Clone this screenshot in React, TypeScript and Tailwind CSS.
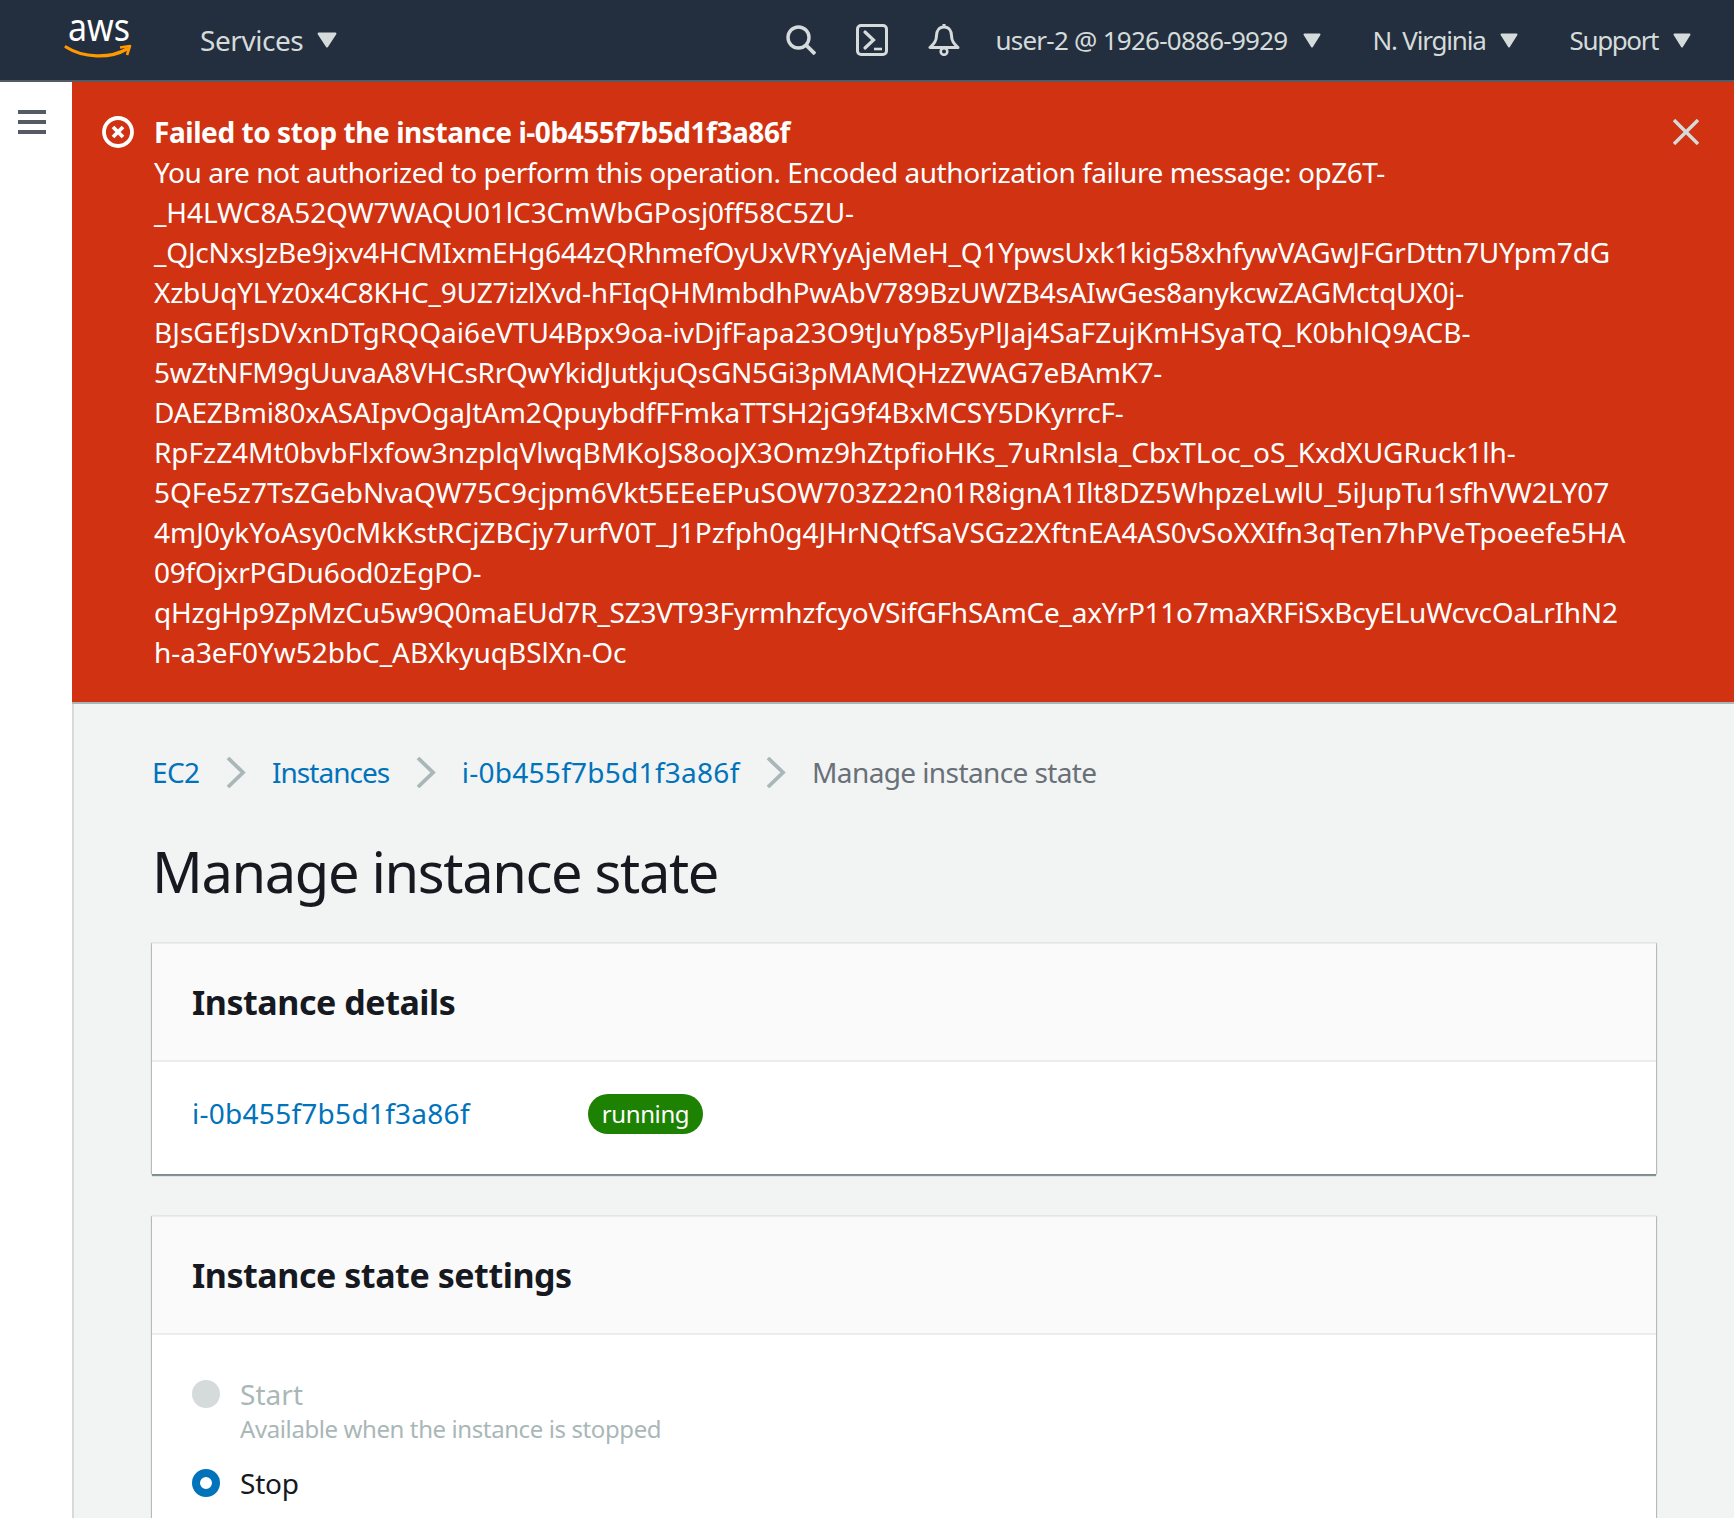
import React from 'react';

// widths of the encoded message lines differ per line, so each one carries its own tracking
const messageLines = [
  { text: 'You are not authorized to perform this operation. Encoded authorization failure message: opZ6T-', cls: 'tracking-[-0.45px]' },
  { text: '_H4LWC8A52QW7WAQU01lC3CmWbGPosj0ff58C5ZU-', cls: 'tracking-[-0.06px]' },
  { text: '_QJcNxsJzBe9jxv4HCMIxmEHg644zQRhmefOyUxVRYyAjeMeH_Q1YpwsUxk1kig58xhfywVAGwJFGrDttn7UYpm7dG', cls: 'tracking-[-0.19px]' },
  { text: 'XzbUqYLYz0x4C8KHC_9UZ7izlXvd-hFIqQHMmbdhPwAbV789BzUWZB4sAIwGes8anykcwZAGMctqUX0j-', cls: 'tracking-[-0.26px]' },
  { text: 'BJsGEfJsDVxnDTgRQQai6eVTU4Bpx9oa-ivDjfFapa23O9tJuYp85yPlJaj4SaFZujKmHSyaTQ_K0bhlQ9ACB-', cls: 'tracking-[0.03px]' },
  { text: '5wZtNFM9gUuvaA8VHCsRrQwYkidJutkjuQsGN5Gi3pMAMQHzZWAG7eBAmK7-', cls: 'tracking-[-0.28px]' },
  { text: 'DAEZBmi80xASAIpvOgaJtAm2QpuybdfFFmkaTTSH2jG9f4BxMCSY5DKyrrcF-', cls: 'tracking-[-0.18px]' },
  { text: 'RpFzZ4Mt0bvbFlxfow3nzplqVlwqBMKoJS8ooJX3Omz9hZtpfioHKs_7uRnlsla_CbxTLoc_oS_KxdXUGRuck1lh-', cls: 'tracking-[-0.05px]' },
  { text: '5QFe5z7TsZGebNvaQW75C9cjpm6Vkt5EEeEPuSOW703Z22n01R8ignA1Ilt8DZ5WhpzeLwlU_5iJupTu1sfhVW2LY07', cls: 'tracking-[-0.07px]' },
  { text: '4mJ0ykYoAsy0cMkKstRCjZBCjy7urfV0T_J1Pzfph0g4JHrNQtfSaVSGz2XftnEA4AS0vSoXXIfn3qTen7hPVeTpoeefe5HA', cls: 'tracking-[0.02px]' },
  { text: '09fOjxrPGDu6od0zEgPO-', cls: 'tracking-[-0.23px]' },
  { text: 'qHzgHp9ZpMzCu5w9Q0maEUd7R_SZ3VT93FyrmhzfcyoVSifGFhSAmCe_axYrP11o7maXRFiSxBcyELuWcvcOaLrIhN2', cls: 'tracking-[-0.25px]' },
  { text: 'h-a3eF0Yw52bbC_ABXkyuqBSlXn-Oc', cls: 'tracking-[-0.05px]' },
];

function Caret({ className = 'w-[18px] h-[15px]' }: { className?: string }) {
  return (
    <svg viewBox="0 0 18 15" preserveAspectRatio="none" className={className}>
      <path d="M1.500 1.500h15L9 13.500z" fill="#d5dbdb" stroke="#d5dbdb" strokeWidth="2" strokeLinejoin="round" />
    </svg>
  );
}

function AwsLogo() {
  return (
    <div className="w-[68px] flex flex-col">
      <span className="ml-[3px] origin-left scale-x-[0.87] whitespace-nowrap text-white text-[39px] leading-[44px] tracking-normal">aws</span>
      <svg viewBox="0 0 68 16" className="-mt-[3px] w-[68px] h-[16px] overflow-visible">
        <path d="M1 2c17 11 44 12 61 2" fill="none" stroke="#ff9900" strokeWidth="3.200" strokeLinecap="round" />
        <path d="M55 2.500l10-1.500-3 9" fill="none" stroke="#ff9900" strokeWidth="2.600" strokeLinejoin="round" />
      </svg>
    </div>
  );
}

function Chevron() {
  return (
    <span className="ml-[26.500px] mr-[26px] flex">
      <svg viewBox="0 0 20 31" className="w-[20px] h-[31px]">
        <path d="M2 1l15 14.500L2 30" fill="none" stroke="#aab7b8" strokeWidth="3.800" />
      </svg>
    </span>
  );
}

function Card({ title, children, className = '' }: { title: string; children: React.ReactNode; className?: string }) {
  return (
    <section className={`bg-white border-t border-[#eaeded] shadow-[0_2px_1px_0_rgba(0,28,36,0.45),-1px_0_1px_0_rgba(0,28,36,0.2),1px_0_1px_0_rgba(0,28,36,0.2)] ${className}`}>
      <div className="h-[118px] bg-[#fafafa] border-b-2 border-[#eaeded] px-10 flex items-center">
        <h2 className="text-[34px] leading-[44px] font-bold text-[#16191f] tracking-[-0.45px]">{title}</h2>
      </div>
      {children}
    </section>
  );
}

export default function App() {
  return (
    <div className="w-[1734px] h-[1518px] overflow-hidden flex flex-col bg-white font-['Noto_Sans',sans-serif] text-[28px] leading-[40px] tracking-[-0.6px] text-[#16191f]">
      <header className="h-[82px] shrink-0 bg-[#232f3e] border-b-2 border-[#545b64] flex items-center text-[#d5dbdb]">
        <div className="ml-[65px] mr-[67px] pb-[15px]"><AwsLogo /></div>
        <span className="tracking-[-0.45px]">Services</span>
        <Caret className="ml-[14px] w-[20px] h-[16px]" />
        <div className="ml-auto flex items-center pr-[43px] text-[26px]">
          <svg viewBox="0 0 30 30" className="w-[30px] h-[30px]">
            <circle cx="12.500" cy="12.500" r="10.500" fill="none" stroke="#d5dbdb" strokeWidth="3.400" />
            <path d="M20 20l9 9" stroke="#d5dbdb" strokeWidth="3.800" />
          </svg>
          <svg viewBox="0 0 32 32" className="ml-[40px] w-[32px] h-[32px]">
            <rect x="1.500" y="1.500" width="29" height="29" rx="3.500" fill="none" stroke="#d5dbdb" strokeWidth="3" />
            <path d="M9 8l8.500 8L9 24" fill="none" stroke="#d5dbdb" strokeWidth="3.200" strokeLinecap="round" />
            <path d="M18 25h8" stroke="#d5dbdb" strokeWidth="2.600" />
          </svg>
          <svg viewBox="0 0 32 32" className="ml-[40px] w-[32px] h-[32px]">
            <path d="M16 3c-5 0-7.500 4-7.500 8.500 0 6-3 8.500-6.500 12h28c-3.500-3.500-6.500-6-6.500-12C23.500 7 21 3 16 3z" fill="none" stroke="#d5dbdb" strokeWidth="3" strokeLinejoin="round" />
            <path d="M16 0v3" stroke="#d5dbdb" strokeWidth="3" />
            <circle cx="16" cy="27.500" r="3.300" fill="none" stroke="#d5dbdb" strokeWidth="2.600" />
          </svg>
          <span className="ml-[35px] tracking-[-0.75px]">user-2 @ 1926-0886-9929</span>
          <Caret className="ml-[16px] w-[18px] h-[15px]" />
          <span className="ml-[51px] tracking-[-1.200px]">N. Virginia</span>
          <Caret className="ml-[14px] w-[18px] h-[15px]" />
          <span className="ml-[52px] tracking-[-1.400px]">Support</span>
          <Caret className="ml-[15px] w-[18px] h-[15px]" />
        </div>
      </header>
      <div className="flex-1 flex min-h-0">
        <aside className="w-[72px] shrink-0 bg-white pt-[28px] pl-[18px]">
          <div className="flex flex-col gap-[6px] w-[28px]">
            <div className="h-[4px] bg-[#545b64]" />
            <div className="h-[4px] bg-[#545b64]" />
            <div className="h-[4px] bg-[#545b64]" />
          </div>
        </aside>
        <main className="flex-1 min-w-0 bg-[#f2f3f3] border-l-2 border-[#d5dbdb]">
          <div className="-ml-[2px] bg-[#d13212] h-[622px] border-b-2 border-[#aab7b8] pt-[30px] pl-[30px] pr-[35px] flex text-white">
            <svg viewBox="0 0 32 32" className="w-[32px] h-[32px] mt-[4px] shrink-0">
              <circle cx="16" cy="16" r="14" fill="none" stroke="#ffffff" strokeWidth="3.800" />
              <path d="M11 11l10 10M21 11L11 21" stroke="#ffffff" strokeWidth="3.800" />
            </svg>
            <div className="ml-[20px] flex-1 whitespace-nowrap">
              <div className="font-bold tracking-[-0.44px]">Failed to stop the instance i-0b455f7b5d1f3a86f</div>
              {messageLines.map((line) => (
                <div key={line.text} className={line.cls}>{line.text}</div>
              ))}
            </div>
            <svg viewBox="0 0 26 26" className="w-[26px] h-[26px] mt-[7px] shrink-0">
              <path d="M1 1l24 24M25 1L1 25" stroke="#d5dbdb" strokeWidth="3.400" />
            </svg>
          </div>
          <div className="pl-[78px] pr-[78px]">
            <nav className="mt-[48px] flex items-center h-[40px]">
              <span className="text-[#0073bb]">EC2</span>
              <Chevron />
              <span className="text-[#0073bb] tracking-[-0.97px]">Instances</span>
              <Chevron />
              <span className="text-[#0073bb] tracking-[0.27px]">i-0b455f7b5d1f3a86f</span>
              <Chevron />
              <span className="text-[#687078]">Manage instance state</span>
            </nav>
            <h1 className="mt-[43px] text-[56px] leading-[72px] font-normal tracking-[-1.340px]">Manage instance state</h1>
            <Card title="Instance details" className="mt-[36px]">
              <div className="h-[112px] pb-[8px] px-10 flex items-center">
                <span className="w-[396px] mb-[3px] text-[#0073bb] tracking-[0.27px]">i-0b455f7b5d1f3a86f</span>
                <span className="h-[40px] w-[115px] rounded-full bg-[#1d8102] text-white text-[24px] leading-[38px] tracking-[-0.4px] flex items-center justify-center">running</span>
              </div>
            </Card>
            <Card title="Instance state settings" className="mt-[42px]">
              <div className="h-[400px] px-10 pt-[39px]">
                <div className="flex items-center h-[40px]">
                  <span className="w-[28px] h-[28px] rounded-full bg-[#d5dbdb]" />
                  <span className="ml-[20px] text-[#aab7b8] tracking-[0.06px]">Start</span>
                </div>
                <div className="ml-[48px] text-[24px] leading-[30px] text-[#aab7b8] tracking-[-0.4px]">Available when the instance is stopped</div>
                <div className="mt-[19px] flex items-center h-[40px]">
                  <span className="w-[28px] h-[28px] rounded-full border-[8px] border-[#0073bb] bg-white" />
                  <span className="ml-[20px] tracking-[-0.2px]">Stop</span>
                </div>
              </div>
            </Card>
          </div>
        </main>
      </div>
    </div>
  );
}
